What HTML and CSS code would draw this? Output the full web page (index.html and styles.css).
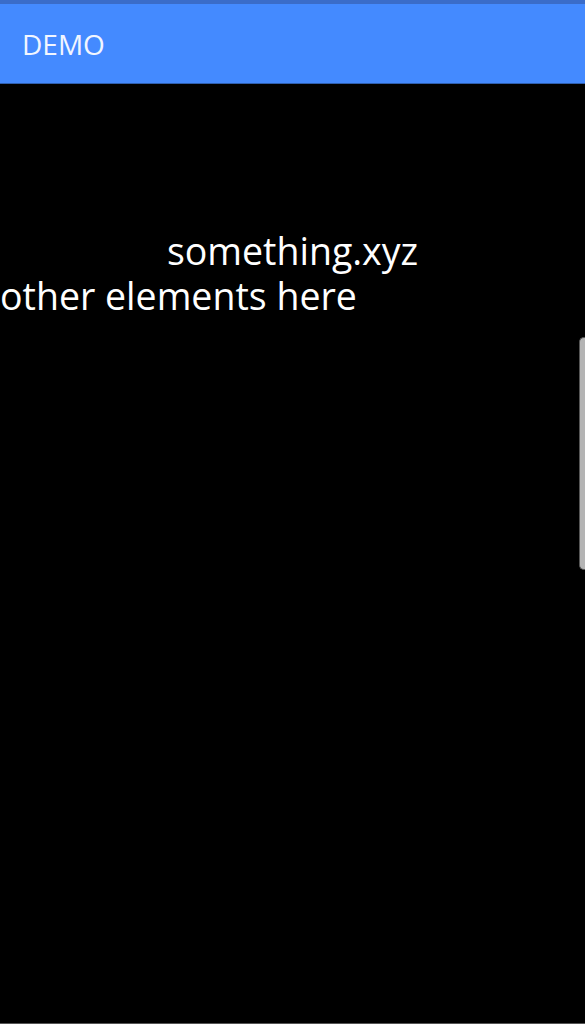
FILE: index.html
```html
<!DOCTYPE html>
<html>
<head>
<meta charset="utf-8">
<link rel="stylesheet" href="styles.css">
</head>
<body>
<div class="status"></div>
<header class="appbar"><span class="title">DEMO</span></header>
<main class="content">
  <div class="centered">something.xyz</div>
  <div class="left">other elements here</div>
</main>
<div class="scrollbar"></div>
<div class="bottomline"></div>
</body>
</html>
```
FILE: styles.css
```css
html, body {
  margin: 0;
  padding: 0;
  background: #000;
  height: 1024px;
  overflow: hidden;
  font-family: "Open Sans", sans-serif;
}
.status {
  height: 4px;
  background: #3a6cc9;
}
.appbar {
  height: 80px;
  background: #448aff;
  display: flex;
  align-items: center;
  padding-left: 22px;
  border-bottom: 1px solid #2f5fae;
  box-sizing: border-box;
}
.title {
  color: #f2f6ff;
  font-size: 28px;
  padding-top: 1px;
}
.content {
  padding-top: 144px;
  color: #fff;
  font-size: 37.5px;
  font-weight: 500;
  line-height: 45px;
}
.centered {
  text-align: center;
}
.scrollbar {
  position: absolute;
  right: 0;
  top: 337px;
  width: 5px;
  height: 231px;
  background: #b4b4b4;
  border: 1px solid #555;
  border-right: none;
  border-radius: 5px 0 0 5px;
}
.bottomline {
  position: absolute;
  left: 0;
  right: 0;
  bottom: 0;
  height: 1px;
  background: #555;
}
```
